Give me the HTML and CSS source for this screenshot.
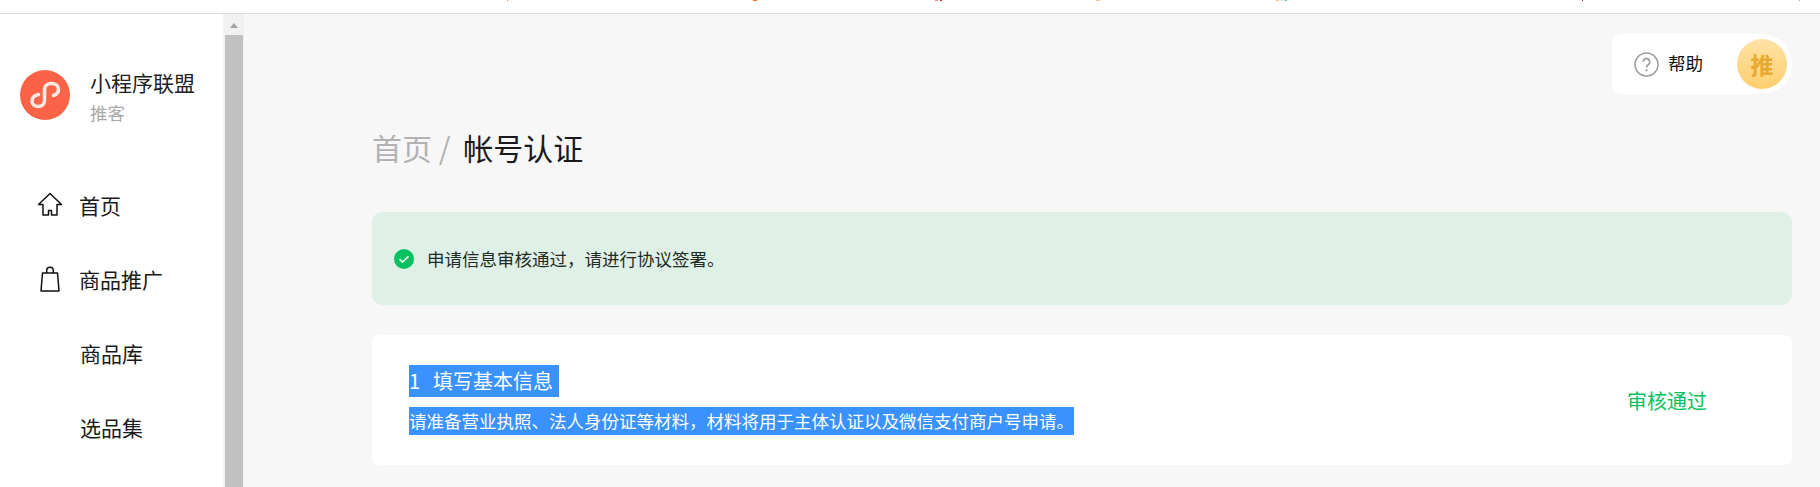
FILE: index.html
```html
<!DOCTYPE html>
<html lang="zh-CN">
<head>
    <meta charset="UTF-8">
    <meta name="viewport" content="width=device-width, initial-scale=1.0">
    <title>帐号认证</title>
    <link rel="stylesheet" href="styles.css">
</head>
<body>
    <div class="topbar">
        <svg class="specks" width="1820" height="1" viewBox="0 0 1820 1">
            <rect x="507" width="1" height="1" fill="#e08a3c"/>
            <rect x="753" width="4" height="1" fill="#ff6a1a"/>
            <rect x="935" width="3" height="1" fill="#f48aa0"/>
            <rect x="940" width="2" height="1" fill="#d8232a"/>
            <rect x="1096" width="4" height="1" fill="#fbc28a"/>
            <rect x="1276" width="3" height="1" fill="#fbbf7a"/>
            <rect x="1281" width="1" height="1" fill="#8cb8e8"/>
            <rect x="1284" width="3" height="1" fill="#6fdca8"/>
            <rect x="1582" width="1" height="1" fill="#8a2050"/>
            <rect x="1799" width="1" height="1" fill="#aaaaaa"/>
        </svg>
    </div>
    <div class="layout">
        <aside class="sidebar">
            <div class="brand">
                <svg class="brand-logo" width="50" height="50" viewBox="0 0 50 50">
                    <circle cx="25" cy="25" r="25" fill="#fa6348"/>
                    <path d="M18.500 24.500C14.500 25.500 12 28 12 31 12 34.300 14.700 36.500 18 36.500 21.500 36.500 24.500 34 24.500 30.500V19.500C24.500 16 27.500 13.500 31.500 13.500 35.500 13.500 38.500 16 38.500 19.500 38.500 22 36.500 24.500 33.500 25.500" fill="none" stroke="#fde9e4" stroke-width="3.600" stroke-linecap="round"/>
                </svg>
                <div class="brand-text">
                    <div class="brand-name">小程序联盟</div>
                    <div class="brand-role">推客</div>
                </div>
            </div>
            <nav class="nav">
                <a class="nav-item">
                    <svg class="nav-icon" width="26" height="26" viewBox="0 0 26 26">
                        <path d="M13 1.500 1.500 12.500H6V23h5.500v-4.500h3V23H20V12.500h4.500z" fill="none" stroke="#111" stroke-width="1.500" stroke-linejoin="round"/>
                    </svg>
                    <span>首页</span>
                </a>
                <a class="nav-item">
                    <svg class="nav-icon" width="26" height="26" viewBox="0 0 26 26">
                        <path d="M5.500 7h15L22 25H4zM9.700 7V4.500a3.300 3.300 0 0 1 6.600 0V7" fill="none" stroke="#111" stroke-width="1.500" stroke-linejoin="round"/>
                    </svg>
                    <span>商品推广</span>
                </a>
                <a class="nav-item nav-sub">商品库</a>
                <a class="nav-item nav-sub">选品集</a>
            </nav>
        </aside>
        <div class="scrollbar">
            <div class="scroll-arrow"></div>
            <div class="scroll-thumb"></div>
        </div>
        <main class="main">
            <div class="header">
                <div class="user-box">
                    <svg width="25" height="25" viewBox="0 0 25 25">
                        <circle cx="12.500" cy="12.500" r="11.500" fill="none" stroke="#9b9b9b" stroke-width="1.500"/>
                        <path d="M9.200 9.800a3.300 3.300 0 1 1 5.200 2.700c-1.200.8-1.900 1.400-1.900 2.900" fill="none" stroke="#9b9b9b" stroke-width="1.700"/>
                        <circle cx="12.500" cy="18.300" r="1.100" fill="#9b9b9b"/>
                    </svg>
                    <span class="help-text">帮助</span>
                    <div class="avatar">推</div>
                </div>
            </div>
            <h1 class="crumb"><span class="crumb-link">首页 /</span> 帐号认证</h1>
            <div class="alert">
                <svg width="20" height="20" viewBox="0 0 20 20">
                    <circle cx="10" cy="10" r="10" fill="#07c160"/>
                    <path d="M5.500 10.300 8.600 13l5.900-5.600" fill="none" stroke="#fff" stroke-width="1.500"/>
                </svg>
                <span>申请信息审核通过，请进行协议签署。</span>
            </div>
            <div class="step">
                <div class="step-info">
                    <div class="step-title"><span class="selected step-title-text"><span class="step-num">1</span>填写基本信息</span></div>
                    <div class="step-desc"><span class="selected">请准备营业执照、法人身份证等材料，材料将用于主体认证以及微信支付商户号申请。</span></div>
                </div>
                <div class="step-status">审核通过</div>
            </div>
        </main>
    </div>
</body>
</html>
```

FILE: styles.css
```css
html, body {
    margin: 0;
    height: 100%;
}
body {
    font-family: "Noto Sans CJK SC", "Liberation Sans", sans-serif;
    display: flex;
    flex-direction: column;
    overflow: hidden;
    background-color: #f7f7f8;
    color: #1a1a1a;
}
.topbar {
    height: 13px;
    flex: none;
    background: #fff;
    border-bottom: 1px solid #dcdcdc;
}
.specks {
    display: block;
}
.layout {
    flex: 1;
    display: flex;
    min-height: 0;
}
.sidebar {
    width: 223px;
    flex: none;
    background: #fff;
}
.brand {
    display: flex;
    align-items: flex-start;
    gap: 20px;
    padding: 53px 0 0 20px;
}
.brand-logo {
    flex: none;
    margin-top: 3px;
}
.brand-name {
    font-size: 21px;
    line-height: 30px;
    color: #222;
}
.brand-role {
    margin-top: 3px;
    font-size: 17.500px;
    line-height: 26px;
    color: #a9a9a9;
}
.nav {
    margin-top: 42px;
}
.nav-item {
    display: flex;
    align-items: center;
    gap: 16px;
    height: 74px;
    padding-left: 37px;
    font-size: 21px;
    color: #1a1a1a;
}
.nav-icon {
    flex: none;
}
.nav-sub {
    padding-left: 80px;
}
.scrollbar {
    width: 21px;
    flex: none;
    box-sizing: border-box;
    padding: 0 1px 0 2px;
    background: #f1f1f1;
}
.scroll-arrow {
    width: 0;
    height: 0;
    margin: 9px auto 7px;
    border-left: 4.500px solid transparent;
    border-right: 4.500px solid transparent;
    border-bottom: 5px solid #a3a3a3;
}
.scroll-thumb {
    height: 100%;
    background: #c1c1c1;
}
.main {
    flex: 1;
    min-width: 0;
    padding: 20px 28px 0 128px;
}
.header {
    display: flex;
    justify-content: flex-end;
}
.user-box {
    display: flex;
    align-items: center;
    width: 180px;
    height: 60px;
    box-sizing: border-box;
    padding: 0 5px 0 22px;
    background: #fff;
    border-radius: 10px 30px 30px 10px;
}
.help-text {
    margin: 0 0 3px 9px;
    font-size: 17.500px;
    color: #111;
}
.avatar {
    width: 50px;
    height: 50px;
    margin-left: auto;
    border-radius: 50%;
    background: linear-gradient(#ffe2a6, #fecf6d);
    color: #e9a92f;
    font-size: 23px;
    font-weight: 700;
    text-align: center;
    line-height: 50px;
}
.crumb {
    margin: 30px 0 0;
    font-size: 30px;
    font-weight: 400;
    line-height: 46px;
    color: #1a1a1a;
}
.crumb-link {
    margin-right: 6px;
    color: #b2b2b2;
}
.alert {
    display: flex;
    align-items: center;
    gap: 13px;
    height: 93px;
    margin-top: 42px;
    padding-left: 22px;
    background: #dff1e7;
    border-radius: 10px;
    font-size: 17.500px;
    color: #1f2a25;
}
.step {
    display: flex;
    justify-content: space-between;
    align-items: center;
    height: 130px;
    margin-top: 30px;
    padding: 0 85px 0 37px;
    background: #fff;
    border-radius: 8px;
}
.step-title {
    height: 32px;
    font-size: 20px;
    line-height: 32px;
}
.step-title-text {
    padding-right: 6px;
}
.step-num {
    display: inline-block;
    width: 24px;
}
.step-desc {
    height: 28px;
    margin-top: 10px;
    font-size: 17.500px;
    line-height: 28px;
}
.selected {
    display: inline-block;
    background: #3a92fe;
    color: #fff;
}
.step-status {
    font-size: 20px;
    color: #07c160;
}
```
